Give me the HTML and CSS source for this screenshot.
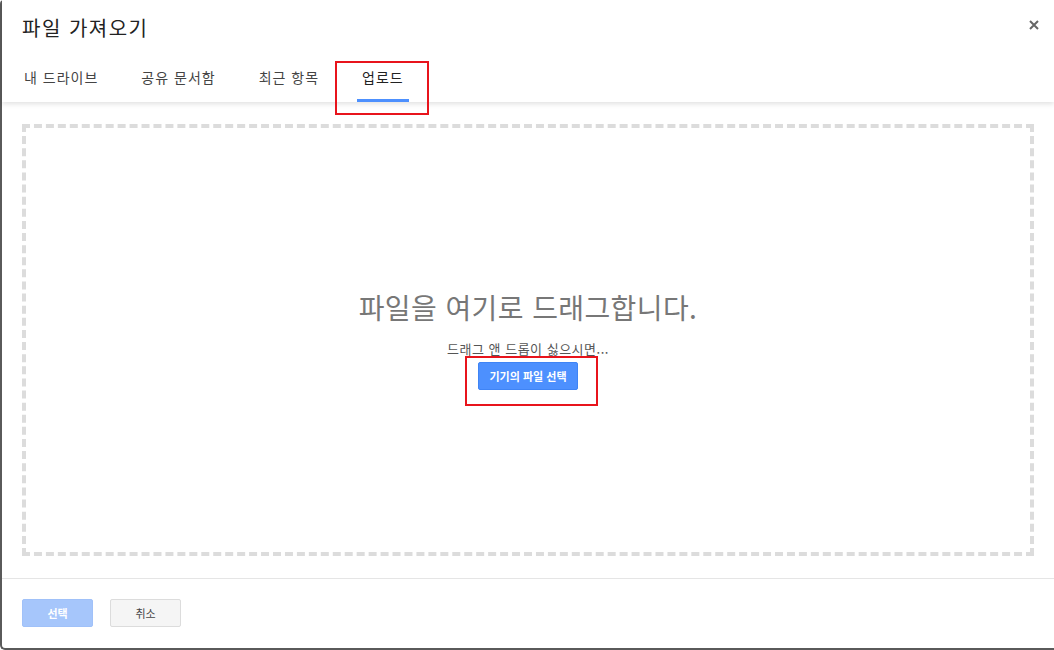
FILE: index.html
```html
<!DOCTYPE html>
<html lang="ko">

<head>
    <meta charset="utf-8">
    <title>파일 가져오기</title>
    <link rel="stylesheet" href="styles.css">
</head>

<body>
    <div class="dialog">
        <div class="header">
            <div class="title-row">
                <h1 class="title">파일 가져오기</h1>
                <button class="close" type="button" aria-label="닫기">
                    <svg width="10" height="10" viewBox="0 0 10 10">
                        <path d="M1 1 L9 9 M9 1 L1 9" stroke="#666" stroke-width="2" fill="none" />
                    </svg>
                </button>
            </div>
            <div class="tabs">
                <div class="tab">내 드라이브</div>
                <div class="tab">공유 문서함</div>
                <div class="tab">최근 항목</div>
                <div class="tab active">업로드<span class="mark mark-tab"></span></div>
            </div>
        </div>

        <div class="content">
            <div class="dropzone">
                <div class="drop-title">파일을 여기로 드래그합니다.</div>
                <div class="drop-sub">드래그 앤 드롭이 싫으시면...</div>
                <button class="btn btn-blue pick" type="button">기기의 파일 선택<span class="mark mark-btn"></span></button>
            </div>
        </div>

        <div class="footer">
            <button class="btn btn-disabled" type="button">선택</button>
            <button class="btn btn-gray" type="button">취소</button>
        </div>
    </div>
</body>

</html>
```

FILE: styles.css
```css
/* 페이지 전체 */
html,
body {
    margin: 0;
    padding: 0;
    background: #fff;
    font-family: Roboto, Arial, "Noto Sans CJK KR", sans-serif;
}

/* 대화상자 */
.dialog {
    box-sizing: border-box;
    height: 650px;
    display: flex;
    flex-direction: column;
    background: #fff;
    border-left: 2px solid #5a5a5a;
    border-bottom: 2px solid #5a5a5a;
    border-radius: 4px 0 0 5px;
}

/* 머리글 */
.header {
    position: relative;
    z-index: 1;
    background: #fff;
    box-shadow: 0 2px 5px rgba(0, 0, 0, 0.12);
}

.title-row {
    display: flex;
    justify-content: space-between;
    align-items: center;
    padding: 16px 15px 9px 20px;
}

.title {
    margin: 0;
    font-size: 20px;
    line-height: 24px;
    font-weight: normal;
    letter-spacing: 1.5px;
    color: #222;
    font-family: "Noto Sans CJK KR", sans-serif;
}

.close {
    border: none;
    background: none;
    padding: 0;
    width: 10px;
    height: 10px;
    cursor: pointer;
    margin-top: -6px;
}

.close svg {
    display: block;
}

/* 탭 */
.tabs {
    display: flex;
    gap: 33px;
    padding-left: 17px;
}

.tab {
    position: relative;
    padding: 18px 5px 12px;
    border-bottom: 3px solid transparent;
    font-size: 14px;
    line-height: 20px;
    letter-spacing: 1px;
    color: #444;
    font-family: "Noto Sans CJK KR", sans-serif;
}

.tab.active {
    border-bottom-color: #4d90fe;
    color: #222;
}

/* 빨간 표시 상자 */
.mark {
    position: absolute;
    box-sizing: border-box;
    border: 2px solid #e8141c;
    pointer-events: none;
}

.mark-tab {
    left: -22px;
    right: -20px;
    top: 12px;
    bottom: -16px;
}

.mark-btn {
    left: -14px;
    right: -21px;
    top: -7px;
    bottom: -17px;
}

/* 내용 */
.content {
    flex: 1;
    display: flex;
    padding: 22px 20px 22px 20px;
}

.dropzone {
    flex: 1;
    display: flex;
    flex-direction: column;
    align-items: center;
    justify-content: center;
    border: 4px dashed #dcdcdc;
    font-family: "Noto Sans CJK KR", sans-serif;
}

.drop-title {
    font-size: 28px;
    line-height: 34px;
    letter-spacing: 0.4px;
    color: #777;
    margin-top: 0;
}

.drop-sub {
    font-size: 13px;
    line-height: 18px;
    letter-spacing: 0.5px;
    color: #555;
    margin-top: 16px;
}

/* 버튼 */
.btn {
    position: relative;
    box-sizing: border-box;
    height: 28px;
    border-radius: 2px;
    font-size: 11px;
    font-weight: bold;
    font-family: "Noto Sans CJK KR", sans-serif;
    cursor: pointer;
}

.btn-blue {
    background: #4d90fe;
    border: 1px solid #3f84f5;
    color: #fff;
    padding: 0 10px;
}

.pick {
    width: 100px;
    margin-top: 4px;
}

.footer {
    display: flex;
    gap: 17px;
    height: 70px;
    box-sizing: border-box;
    padding: 20px 20px 0;
    border-top: 1px solid #e5e5e5;
}

.btn-disabled {
    width: 71px;
    background: #a6c6fb;
    border: 1px solid #a0c1f9;
    color: #fff;
}

.btn-gray {
    width: 71px;
    background: #f5f5f5;
    border: 1px solid #dcdcdc;
    color: #444;
    font-weight: normal;
}
```
